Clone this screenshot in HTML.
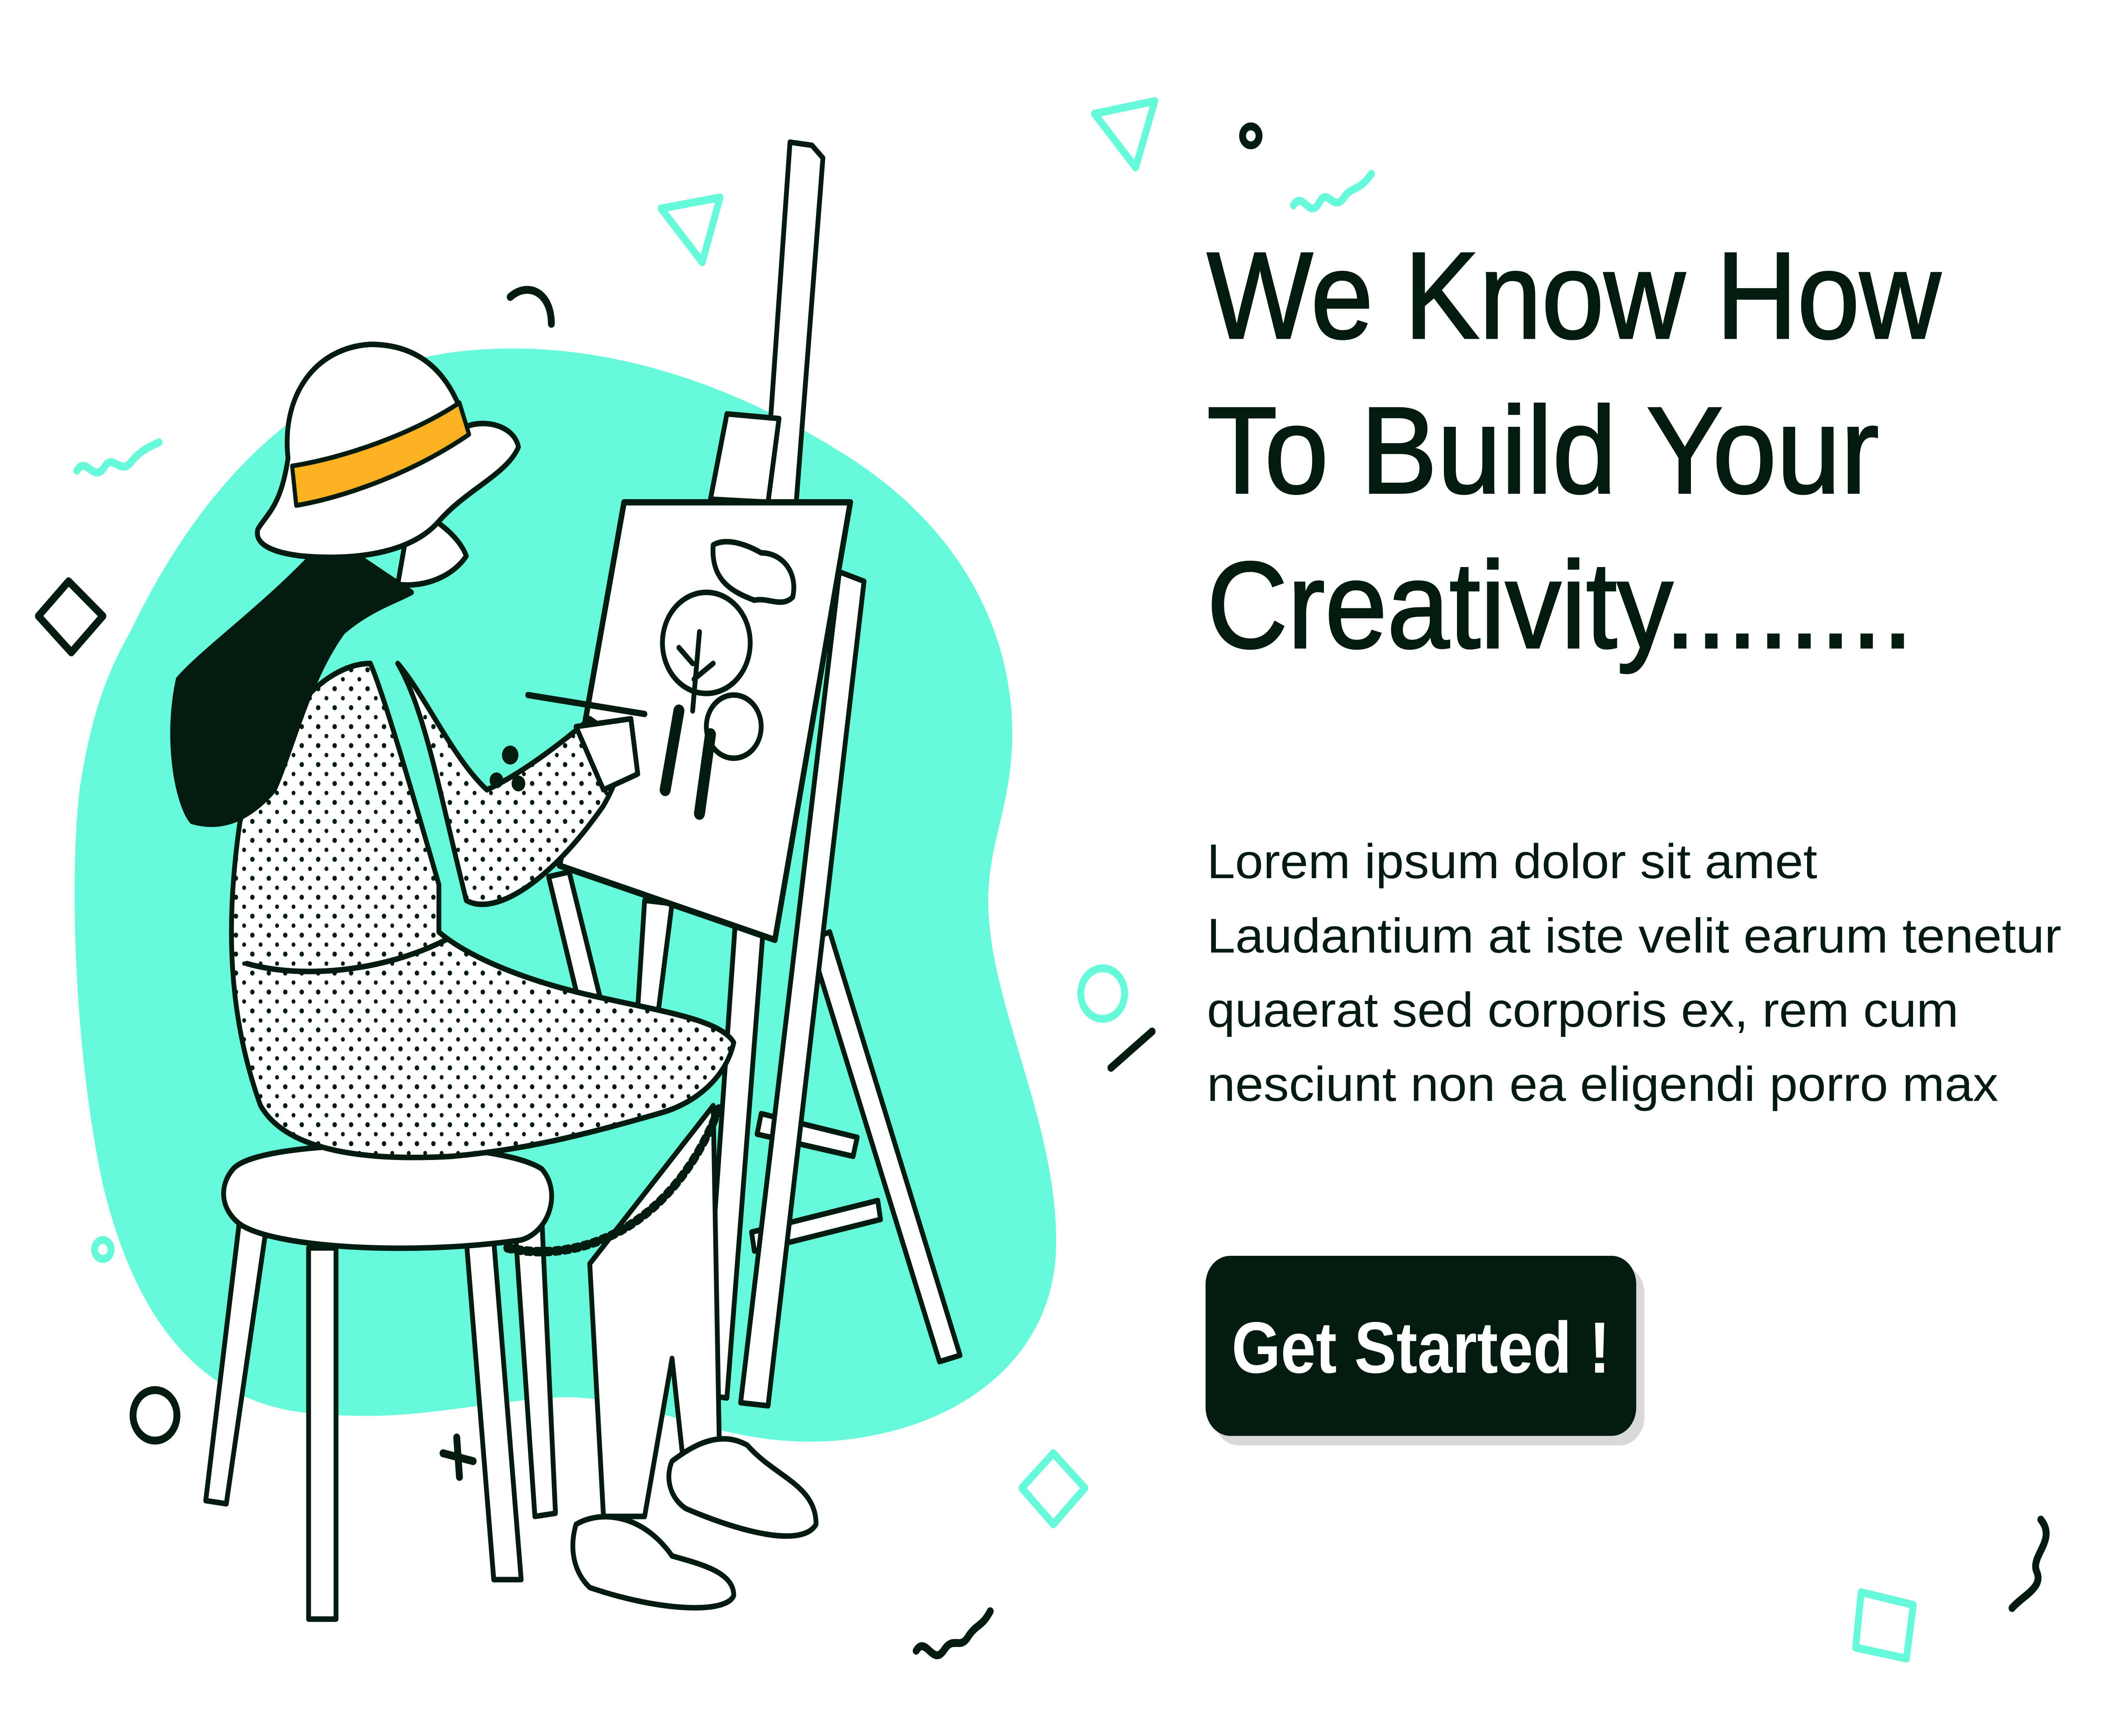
<!DOCTYPE html>
<html><head><meta charset="utf-8"><style>
html,body{margin:0;padding:0;background:#fff;width:100%;height:100%;overflow:hidden}
svg{display:block;width:100vw;height:100vh}
</style></head><body>
<svg viewBox="0 0 1545 1099" preserveAspectRatio="none" xmlns="http://www.w3.org/2000/svg">
<defs>
<pattern id="dots" width="12" height="12" patternUnits="userSpaceOnUse"><rect width="12" height="12" fill="#fff"/><circle cx="4" cy="4" r="1.6" fill="#021a0f"/><circle cx="10" cy="10" r="1.4" fill="#021a0f"/></pattern>
</defs>
<path d="M95 400 C150 300 230 235 330 223 C430 212 530 240 620 290 C700 335 740 400 738 470 C736 520 715 540 722 590 C730 650 772 720 770 790 C768 860 700 905 610 912 C520 918 470 880 400 885 C330 890 300 900 230 895 C150 890 100 840 75 750 C55 670 50 560 58 500 C65 460 75 430 95 400Z" fill="#66f9da"/>
<g stroke="#021a0f" stroke-width="3.5" stroke-linejoin="round" stroke-linecap="round">
<path d="M590 595 L605 590 L700 858 L685 862Z" fill="#fff"/>
<path d="M555 705 L625 720 L622 732 L552 718Z M548 780 L640 760 L642 772 L550 792Z" fill="#fff"/>
<path d="M400 555 L415 552 L440 640 L425 645Z" fill="#fff"/>
<path d="M470 570 L490 572 L480 640 L465 638Z" fill="#fff"/>
<path d="M576 90 L592 92 L600 100 L530 885 L512 883Z" fill="#fff"/>
<path d="M530 262 L568 265 L560 318 L518 316Z" fill="#fff"/>
<path d="M612 362 L630 368 L560 890 L540 888Z" fill="#fff"/>
<path d="M455 318 L620 318 L565 595 L408 548Z" fill="#fff" stroke-width="4"/>
<circle cx="515" cy="407" r="32" fill="none"/>
<circle cx="535" cy="460" r="20" fill="none"/>
<path d="M520 345 C530 340 545 345 555 350 C570 350 582 362 578 378 C570 385 560 378 550 380 C535 375 518 368 520 345Z" fill="none"/>
<path d="M495 450 L485 500 M518 465 L510 515" stroke-width="8"/>
<path d="M510 400 L505 450 M505 420 L495 410 M506 430 L520 420"/>
<path d="M175 770 L150 950 L165 952 L195 772Z M225 790 L225 1025 L245 1025 L245 790Z M340 785 L360 1000 L380 1000 L360 785Z M375 770 L390 960 L405 958 L395 770Z" fill="#fff"/>
<path d="M170 740 C190 720 360 720 395 740 C410 755 400 780 380 785 C300 795 200 790 175 775 C160 765 160 750 170 740Z" fill="#fff"/>
<path d="M430 800 L440 960 L470 960 L490 860 L500 940 L525 940 L520 700 Z" fill="#fff"/>
<path d="M420 965 C440 955 470 960 490 985 C510 990 535 995 535 1010 C530 1022 480 1020 430 1005 C418 995 415 980 420 965Z" fill="#fff"/>
<path d="M490 925 C505 915 525 905 545 915 C565 935 595 940 595 965 C585 980 540 970 500 955 C488 948 485 935 490 925Z" fill="#fff"/>
<path d="M175 520 C165 580 165 640 190 700 C210 730 270 735 330 732 C380 728 420 720 480 705 C510 698 530 680 535 660 C525 645 480 640 430 630 C380 620 340 605 320 590 L320 560 C300 500 280 440 270 420 C240 420 200 450 175 520Z" fill="url(#dots)"/>
<path d="M180 610 C220 620 280 615 325 595" fill="none"/>
<path d="M370 790 C420 800 490 780 525 700" fill="none" stroke-width="6" stroke-dasharray="3 4"/>
<path d="M290 420 C310 450 320 500 340 570 C360 580 400 560 440 510 C450 495 455 480 455 470 L430 455 C410 470 380 490 355 500 C330 480 310 440 290 420Z" fill="url(#dots)"/>
<path d="M420 460 L460 455 L465 490 L440 500Z" fill="#fff"/>
<path d="M385 440 L470 452" stroke-width="4"/>
<circle cx="372" cy="478" r="6" fill="#021a0f" stroke="none"/><circle cx="362" cy="494" r="5" fill="#021a0f" stroke="none"/><circle cx="378" cy="496" r="5" fill="#021a0f" stroke="none"/>
<path d="M240 340 C200 380 150 410 130 430 C120 470 130 510 140 520 C160 525 180 520 200 500 C215 470 225 430 250 400 C270 385 290 380 300 375 Z" fill="#021a0f"/>
<path d="M300 320 C320 330 335 340 340 352 C330 365 310 372 290 370 Z" fill="#fff"/>
<path d="M210 290 C205 250 230 220 270 218 C310 218 330 240 340 270 C355 265 375 270 378 283 C370 300 340 310 320 330 C300 350 260 355 220 352 C200 350 185 345 188 335 C195 325 205 320 210 290Z" fill="#fff"/>
<path d="M213 295 C250 290 300 275 335 255 L342 275 C300 300 250 315 216 320Z" fill="#fbb120" stroke-width="3"/>
</g>
<g fill="none" stroke-width="5" stroke-linecap="round" stroke-linejoin="round">
<path d="M482 132 L525 125 L512 166Z" stroke="#66f9da"/>
<path d="M798 72 L842 64 L828 106Z" stroke="#66f9da"/>
<circle cx="912" cy="86" r="6" stroke="#021a0f"/>
<path d="M943 130 C950 120 955 140 962 128 C968 118 972 135 980 125 C985 118 990 122 1000 110" stroke="#66f9da"/>
<path d="M56 298 C63 288 68 306 76 296 C82 286 88 302 96 292 C102 286 106 284 116 280" stroke="#66f9da"/>
<path d="M372 188 C385 178 402 185 402 205" stroke="#021a0f"/>
<path d="M28 390 L50 368 L75 390 L52 413Z" stroke="#021a0f"/>
<circle cx="804" cy="629" r="16" stroke="#66f9da"/>
<path d="M810 676 L840 653" stroke="#021a0f"/>
<circle cx="75" cy="791" r="6" stroke="#66f9da"/>
<circle cx="113" cy="896" r="16" stroke="#021a0f"/>
<path d="M323 920 L345 925 M333 910 L335 935" stroke="#021a0f"/>
<path d="M745 942 L768 920 L791 942 L768 965Z" stroke="#66f9da"/>
<path d="M668 1045 C675 1035 680 1055 688 1045 C695 1035 700 1045 706 1036 C712 1028 716 1030 722 1020" stroke="#021a0f"/>
<path d="M1357 1008 L1395 1016 L1390 1050 L1353 1043Z" stroke="#66f9da"/>
<path d="M1488 962 C1500 975 1480 985 1485 995 C1490 1005 1475 1010 1467 1018" stroke="#021a0f"/>
</g>
<g fill="#021a0f" font-family="Liberation Sans, sans-serif" stroke="#021a0f" stroke-width="1.2">
<text x="880" y="214" font-size="78" textLength="535" lengthAdjust="spacingAndGlyphs">We Know How</text>
<text x="880" y="312" font-size="78" textLength="490" lengthAdjust="spacingAndGlyphs">To Build Your</text>
<text x="880" y="410" font-size="78" textLength="515" lengthAdjust="spacingAndGlyphs">Creativity........</text>
</g>
<g fill="#021a0f" font-family="Liberation Sans, sans-serif">
<text x="880" y="556" font-size="31" textLength="445" lengthAdjust="spacingAndGlyphs">Lorem ipsum dolor sit amet</text>
<text x="880" y="603" font-size="31" textLength="623" lengthAdjust="spacingAndGlyphs">Laudantium at iste velit earum tenetur</text>
<text x="880" y="650" font-size="31" textLength="548" lengthAdjust="spacingAndGlyphs">quaerat sed corporis ex, rem cum</text>
<text x="880" y="697" font-size="31" textLength="577" lengthAdjust="spacingAndGlyphs">nesciunt non ea eligendi porro max</text>
</g>
<rect x="885" y="801" width="314" height="114" rx="18" fill="#d8d8d8"/>
<rect x="879" y="795" width="314" height="114" rx="18" fill="#021a0f"/>
<text x="898" y="869" font-family="Liberation Sans, sans-serif" font-size="46" font-weight="bold" fill="#fff" textLength="276" lengthAdjust="spacingAndGlyphs">Get Started !</text>
</svg>
</body></html>
